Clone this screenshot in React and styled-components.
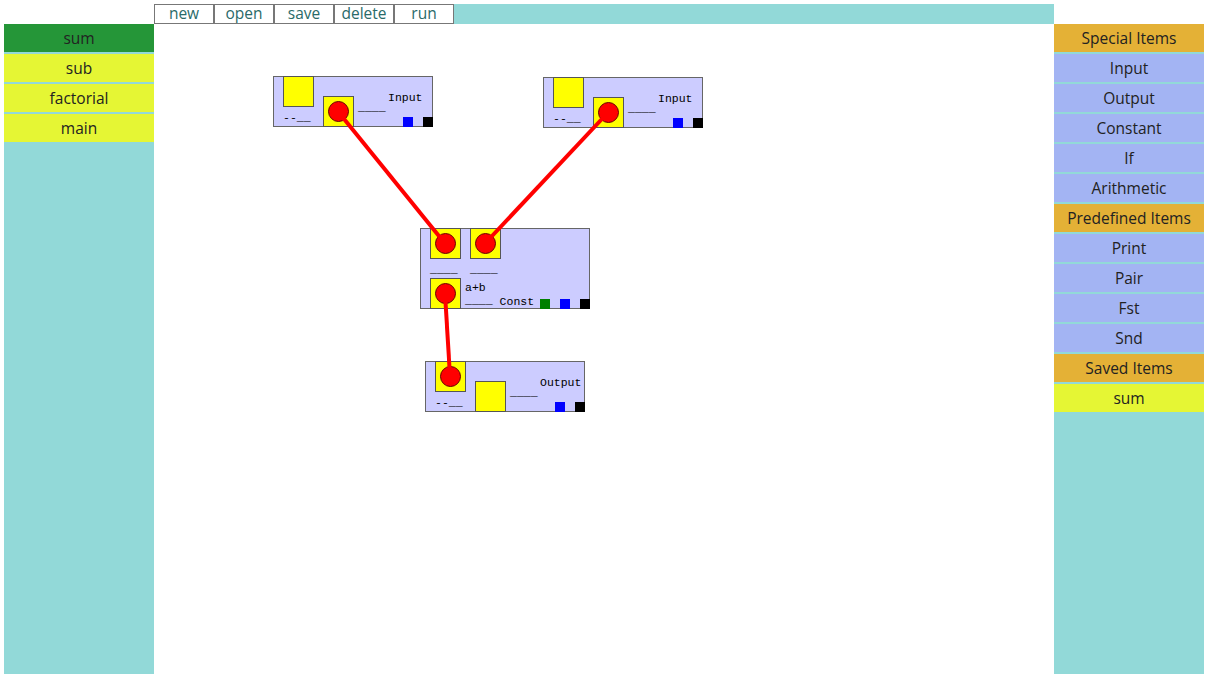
import React from 'react'
import styled, { createGlobalStyle } from 'styled-components'

const GlobalStyle = createGlobalStyle`
  html, body {
    margin: 0;
    background: #ffffff;
  }
  body {
    padding: 4px;
    font-family: "Open Sans", "Noto Sans", sans-serif;
  }
`

const toolbarButtons = ['new', 'open', 'save', 'delete', 'run']
const programs = ['sum', 'sub', 'factorial', 'main']

const palette = [
  { title: 'Special Items', items: ['Input', 'Output', 'Constant', 'If', 'Arithmetic'], kind: 'special' },
  { title: 'Predefined Items', items: ['Print', 'Pair', 'Fst', 'Snd'], kind: 'special' },
  { title: 'Saved Items', items: ['sum'], kind: 'saved' },
]

// where each node sits on the free canvas
const ioNodes = [
  { id: 'in1', label: 'Input', x: 119, y: 52, linked: 'b' },
  { id: 'in2', label: 'Input', x: 389, y: 53, linked: 'b' },
  { id: 'out', label: 'Output', x: 271, y: 337, linked: 'a' },
]
const constNode = { x: 266, y: 204, expr: 'a+b' }

// wire ends = port centres, canvas coords
const wires = [
  [184, 87.5, 291, 219.5],
  [454, 88.5, 331, 219.5],
  [291, 269.5, 296, 352],
]

function IoBlock({ node }) {
  return (
    <IoNode style={{ left: node.x, top: node.y }}>
      <PortColumn>
        <Port>{node.linked === 'a' && <Dot />}</Port>
        <Mono $pad="0 0 3px">--__</Mono>
      </PortColumn>
      <LowPort>{node.linked === 'b' && <Dot />}</LowPort>
      <Mono $pad="26px 0 0">____</Mono>
      <LabelColumn>
        <Mono $pad="16px 0 0">{node.label}</Mono>
        <Swatches>
          <Swatch $color="#0000ff" />
          <Swatch $color="#000000" />
        </Swatches>
      </LabelColumn>
    </IoNode>
  )
}

function ConstBlock({ node }) {
  return (
    <ConstNode style={{ left: node.x, top: node.y }}>
      <InputsRow>
        <InputStack>
          <Port><Dot /></Port>
          <Mono>____</Mono>
        </InputStack>
        <InputStack>
          <Port><Dot /></Port>
          <Mono>____</Mono>
        </InputStack>
      </InputsRow>
      <OutputRow>
        <Port><Dot /></Port>
        <ExprStack>
          <Mono>{node.expr}</Mono>
          <Mono>____</Mono>
        </ExprStack>
        <Mono $pad="0 0 1px">Const</Mono>
        <Swatches>
          <Swatch $color="#008000" />
          <Swatch $color="#0000ff" />
          <Swatch $color="#000000" />
        </Swatches>
      </OutputRow>
    </ConstNode>
  )
}

function App() {
  return (
    <>
      <GlobalStyle />
      <Layout>
        <Toolbar>
          {toolbarButtons.map((b) => (
            <ToolButton key={b}>{b}</ToolButton>
          ))}
        </Toolbar>

        <Sidebar>
          {programs.map((p, i) => (
            <SideItem key={p} $kind={i === 0 ? 'active' : 'saved'}>{p}</SideItem>
          ))}
        </Sidebar>

        <Canvas>
          {ioNodes.map((n) => (
            <IoBlock key={n.id} node={n} />
          ))}
          <ConstBlock node={constNode} />

          <Wires width="900" height="650">
            {wires.map(([x1, y1, x2, y2], i) => (
              <line key={i} x1={x1} y1={y1} x2={x2} y2={y2} stroke="#ff0000" strokeWidth="4" />
            ))}
          </Wires>
        </Canvas>

        <Sidebar>
          {palette.map((group) => (
            <React.Fragment key={group.title}>
              <SideItem $kind="header">{group.title}</SideItem>
              {group.items.map((it) => (
                <SideItem key={group.title + it} $kind={group.kind}>{it}</SideItem>
              ))}
            </React.Fragment>
          ))}
        </Sidebar>
      </Layout>
    </>
  )
}

export default App

const Layout = styled.div`
  display: grid;
  grid-template-columns: 150px 900px 150px;
  grid-template-rows: 20px 650px;
`

const Toolbar = styled.div`
  grid-column: 2;
  grid-row: 1;
  display: flex;
  background: #92d9d8;
`

const ToolButton = styled.div`
  box-sizing: border-box;
  width: 60px;
  height: 20px;
  border: 1px solid #777777;
  background: #ffffff;
  color: #2a6a69;
  font-size: 15.5px;
  line-height: 17px;
  text-align: center;
`

const Sidebar = styled.div`
  grid-row: 2;
  display: flex;
  flex-direction: column;
  gap: 2px;
  background: #92d9d8;
`

const itemColors = {
  active: '#259638',
  saved: '#e5f634',
  header: '#e4b136',
  special: '#a3b4f3',
}

const SideItem = styled.div`
  height: 28px;
  line-height: 28px;
  text-align: center;
  font-size: 15.5px;
  color: #222222;
  background: ${(p) => itemColors[p.$kind]};
`

const Canvas = styled.div`
  grid-column: 2;
  grid-row: 2;
  position: relative;
  background: #ffffff;
  overflow: hidden;
`

/* node frame: border drawn as inset shadow so ports can sit on the edge */
const NodeFrame = styled.div`
  position: absolute;
  box-sizing: border-box;
  background: #ccccff;
  box-shadow: inset 0 0 0 1px #666666;
`

const IoNode = styled(NodeFrame)`
  width: 160px;
  height: 51px;
  padding-left: 10px;
  display: grid;
  grid-template-columns: 40px 35px 30px 45px;
`

const ConstNode = styled(NodeFrame)`
  width: 170px;
  height: 81px;
  padding-left: 10px;
  display: flex;
  flex-direction: column;
  justify-content: space-between;
`

const Port = styled.div`
  box-sizing: border-box;
  width: 31px;
  height: 31px;
  background: #ffff00;
  border: 1px solid #555555;
  display: flex;
  align-items: center;
  justify-content: center;
`

const LowPort = styled(Port)`
  align-self: end;
`

const Dot = styled.div`
  box-sizing: border-box;
  width: 21px;
  height: 21px;
  border-radius: 50%;
  background: #ff0000;
  border: 1px solid #660000;
`

const PortColumn = styled.div`
  display: flex;
  flex-direction: column;
  justify-content: space-between;
`

const LabelColumn = styled.div`
  display: flex;
  flex-direction: column;
  justify-content: space-between;
`

const Swatches = styled.div`
  display: flex;
  justify-content: flex-end;
  align-self: flex-end;
  gap: 10px;
  margin-left: auto;
`

const Swatch = styled.div`
  width: 10px;
  height: 10px;
  background: ${(p) => p.$color};
`

const Mono = styled.div`
  padding: ${(p) => p.$pad || '0'};
  font-family: "Liberation Mono", "Courier New", monospace;
  font-size: 11.5px;
  line-height: 12px;
  color: #000000;
  white-space: pre;
`

const InputsRow = styled.div`
  display: flex;
  gap: 9px;
`

const InputStack = styled.div`
  display: flex;
  flex-direction: column;
  gap: 5px;
`

const OutputRow = styled.div`
  display: flex;
  align-items: flex-end;
`

const ExprStack = styled.div`
  display: flex;
  flex-direction: column;
  gap: 1px;
  margin: 0 7px 2px 4px;
`

const Wires = styled.svg`
  position: absolute;
  left: 0;
  top: 0;
  pointer-events: none;
`
